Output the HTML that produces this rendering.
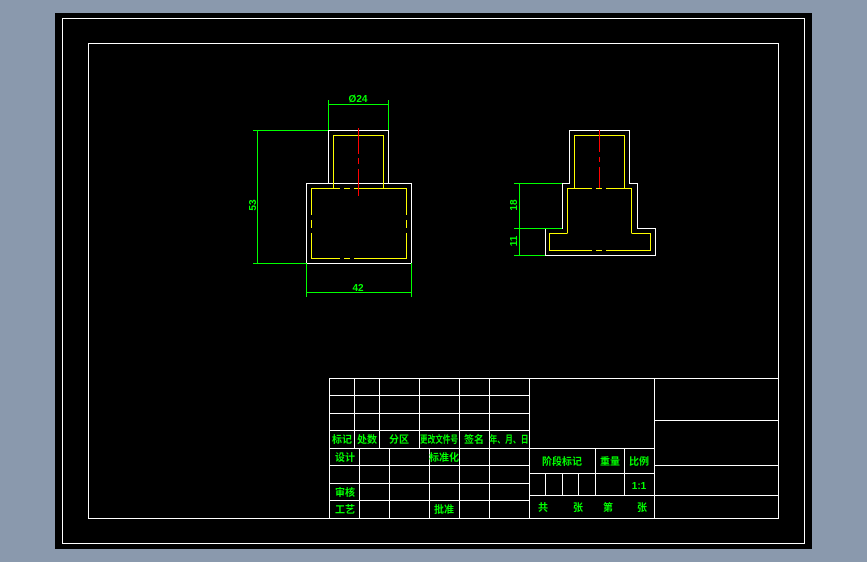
<!DOCTYPE html>
<html><head><meta charset="utf-8"><style>
html,body{margin:0;padding:0;width:867px;height:562px;overflow:hidden;background:#8a99ad}
svg{display:block}
text{font-family:"Liberation Sans","Noto Sans CJK SC",sans-serif;fill:#00ff00;font-weight:bold}
</style></head><body>
<svg width="867" height="562" viewBox="0 0 867 562" xmlns="http://www.w3.org/2000/svg">
<rect x="0" y="0" width="867" height="562" fill="#8a99ad"/>
<rect x="55" y="13" width="757" height="536" fill="#000"/>
<g fill="none" stroke="#fff" stroke-width="1">
<rect x="62.5" y="18.5" width="742" height="525"/>
<rect x="88.5" y="43.5" width="690" height="475"/>
<rect x="328.5" y="130.5" width="60" height="53"/>
<rect x="306.5" y="183.5" width="105" height="80"/>
<path d="M569.5 183.5V130.5H629.5V183.5H637.5V228.5H655.5V255.5H545.5V228.5H562.5V183.5Z"/>
</g>
<g fill="none" stroke="#ffff00" stroke-width="1">
<path d="M333.5 188V135.5H383.5V188"/>
<path d="M311.5 215V188.5H406.5V215 M311.5 220v8 M311.5 233v25.5H406.5V233 M406.5 220v8"/>
<path d="M574.5 188V135.5H624.5V188"/>
<path d="M567.5 233V188.5H631.5V233"/>
<path d="M567.5 233.5H549.5V250.5H650.5V233.5H631.5"/>
</g>
<g stroke="#000" stroke-width="2">
<path d="M340 188.5h4M350 188.5h4M340 258.5h4M350 258.5h4M592 188.5h4M602 188.5h4M592 250.5h4M602 250.5h4"/>
</g>
<g stroke="#ff0000" stroke-width="1">
<path d="M358.5 128V154M358.5 158V164M358.5 169V196"/>
<path d="M599.5 130V152M599.5 157V162M599.5 167V188"/>
</g>
<g stroke="#00ff00" stroke-width="1" fill="none">
<path d="M328.5 100V130M388.5 100V130M328 104.5H389"/>
<path d="M253 130.5H328M253 263.5H306M257.5 130V264"/>
<path d="M306.5 263V297M411.5 263V297M306 292.5H412"/>
<path d="M514 183.5H562M514 228.5H562M514 255.5H545M519.5 183V256"/>
</g>
<text x="358" y="102" font-size="10" text-anchor="middle">Ø24</text>
<text x="358" y="291" font-size="10" text-anchor="middle">42</text>
<text transform="translate(256,205) rotate(-90)" font-size="10" text-anchor="middle">53</text>
<text transform="translate(517,205) rotate(-90)" font-size="10" text-anchor="middle">18</text>
<text transform="translate(517,241) rotate(-90)" font-size="10" text-anchor="middle">11</text>
<g stroke="#fff" stroke-width="1" fill="none">
<path d="M329.5 378.5H779 M329.5 378V518 M529.5 378V518 M654.5 378V518"/>
<path d="M330 395.5H529M330 413.5H529M330 430.5H529M330 448.5H654M330 465.5H529M330 483.5H529M330 500.5H529"/>
<path d="M354.5 378V448M379.5 378V448M419.5 378V448M459.5 378V448M489.5 378V448"/>
<path d="M359.5 448V518M389.5 448V518M429.5 448V518M459.5 448V518M489.5 448V518"/>
<path d="M530 473.5H654M530 495.5H654M595.5 448V495M624.5 448V495M545.5 473V495M562.5 473V495M578.5 473V495"/>
<path d="M655 420.5H779M655 465.5H779M655 495.5H779"/>
</g>
<g font-size="10">
<text x="342" y="443" text-anchor="middle">标记</text>
<text x="367" y="443" text-anchor="middle">处数</text>
<text x="399" y="443" text-anchor="middle">分区</text>
<text x="439" y="443" text-anchor="middle" textLength="38" lengthAdjust="spacingAndGlyphs">更改文件号</text>
<text x="474" y="443" text-anchor="middle">签名</text>
<text x="509" y="443" text-anchor="middle" textLength="39" lengthAdjust="spacingAndGlyphs">年、月、日</text>
<text x="345" y="461" text-anchor="middle">设计</text>
<text x="444" y="461" text-anchor="middle">标准化</text>
<text x="345" y="496" text-anchor="middle">审核</text>
<text x="345" y="513" text-anchor="middle">工艺</text>
<text x="444" y="513" text-anchor="middle">批准</text>
<text x="562" y="465" text-anchor="middle">阶段标记</text>
<text x="610" y="465" text-anchor="middle">重量</text>
<text x="639" y="465" text-anchor="middle">比例</text>
<text x="639" y="489" text-anchor="middle" font-weight="normal">1:1</text>
<text x="543" y="511" text-anchor="middle">共</text>
<text x="578" y="511" text-anchor="middle">张</text>
<text x="608" y="511" text-anchor="middle">第</text>
<text x="642" y="511" text-anchor="middle">张</text>
</g>
</svg>
</body></html>
